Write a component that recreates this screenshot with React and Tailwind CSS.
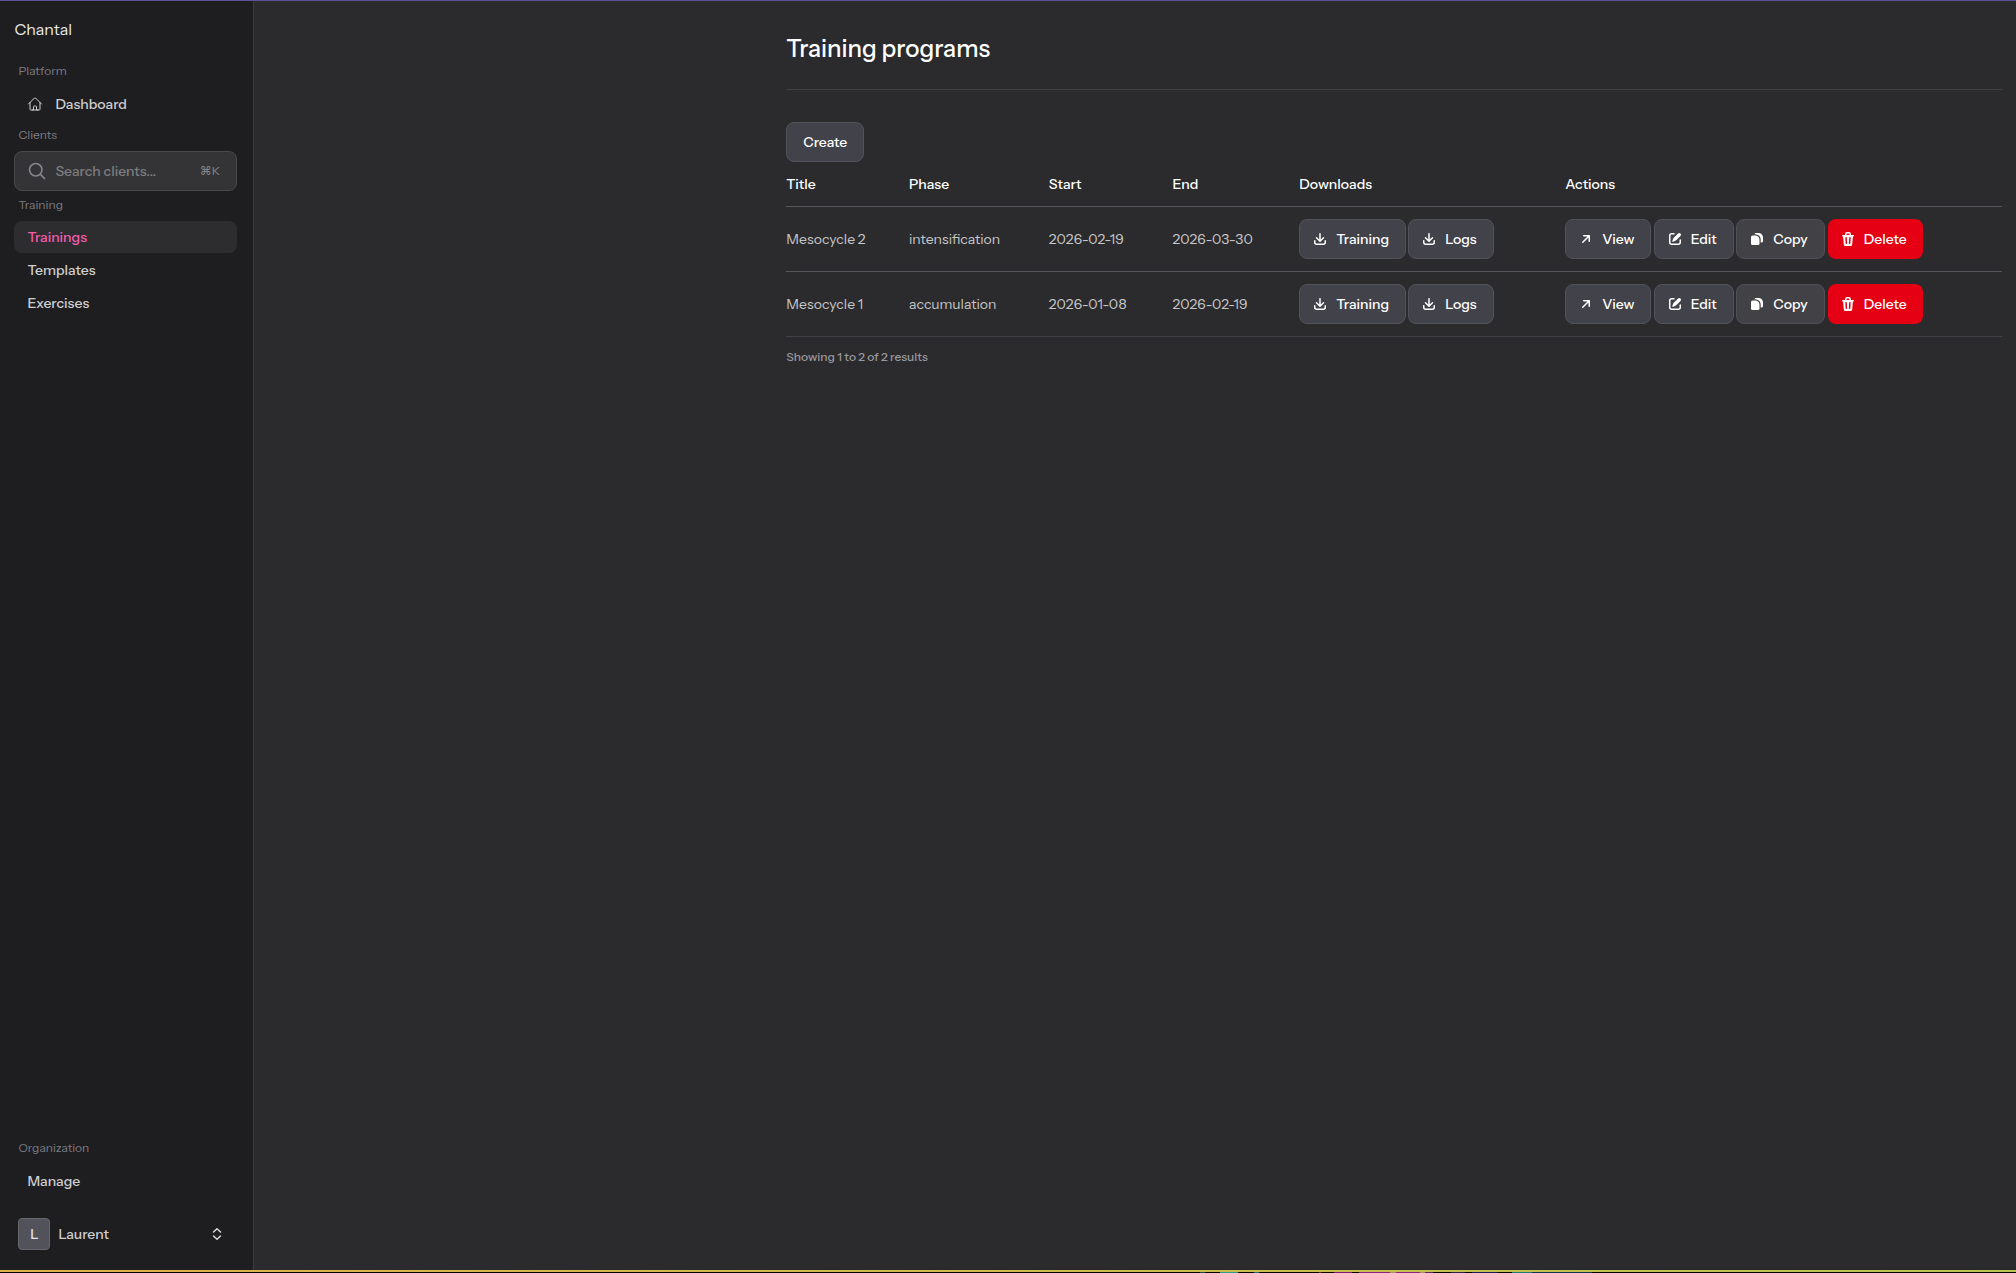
import { clsx } from 'clsx';

const icons = {
  download: [
    'M8.75 2.75a.75.75 0 0 0-1.5 0v5.69L5.03 6.22a.75.75 0 0 0-1.06 1.06l3.5 3.5a.75.75 0 0 0 1.06 0l3.5-3.5a.75.75 0 0 0-1.06-1.06L8.75 8.44V2.75Z',
    'M3.5 9.75a.75.75 0 0 0-1.5 0v1.5A2.75 2.75 0 0 0 4.75 14h6.5A2.75 2.75 0 0 0 14 11.25v-1.5a.75.75 0 0 0-1.5 0v1.5c0 .69-.56 1.25-1.25 1.25h-6.5c-.69 0-1.25-.56-1.25-1.25v-1.5Z',
  ],
  view: [
    'M4.22 11.78a.75.75 0 0 1 0-1.06L9.44 5.5H5.75a.75.75 0 0 1 0-1.5h5.5a.75.75 0 0 1 .75.75v5.5a.75.75 0 0 1-1.5 0V6.56l-5.22 5.22a.75.75 0 0 1-1.06 0Z',
  ],
  edit: [
    'M13.488 2.513a1.75 1.75 0 0 0-2.475 0L6.75 6.774a2.75 2.75 0 0 0-.596.892l-.848 2.047a.75.75 0 0 0 .98.98l2.047-.848a2.75 2.75 0 0 0 .892-.596l4.261-4.262a1.75 1.75 0 0 0 0-2.474Z',
    'M4.75 3.5c-.69 0-1.25.56-1.25 1.25v6.5c0 .69.56 1.25 1.25 1.25h6.5c.69 0 1.25-.56 1.25-1.25V9A.75.75 0 0 1 14 9v2.25A2.75 2.75 0 0 1 11.25 14h-6.5A2.75 2.75 0 0 1 2 11.25v-6.5A2.75 2.75 0 0 1 4.75 2H7a.75.75 0 0 1 0 1.5H4.75Z',
  ],
  copy: [
    'M5.500 3.200A1.500 1.500 0 0 1 7 2h2.500A4.500 4.500 0 0 1 14 6.500V10a1.500 1.500 0 0 1-1.500 1.500H11.700V8.500A5.300 5.300 0 0 0 6.500 3.200Z',
    'M2 6A1.500 1.500 0 0 1 3.500 4.500H6.300A4.200 4.200 0 0 1 10.500 8.700v3.800A1.500 1.500 0 0 1 9 14H3.500A1.500 1.500 0 0 1 2 12.500Z',
  ],
  trash: [
    'M5 3.25V4H2.75a.75.75 0 0 0 0 1.5h.3l.815 8.15A1.5 1.5 0 0 0 5.357 15h5.285a1.5 1.5 0 0 0 1.493-1.35l.815-8.15h.3a.75.75 0 0 0 0-1.5H11v-.75A2.25 2.25 0 0 0 8.75 1h-1.5A2.25 2.25 0 0 0 5 3.25Zm2.25-.75a.75.75 0 0 0-.75.75V4h3v-.75a.75.75 0 0 0-.75-.75h-1.5ZM6.05 6a.75.75 0 0 1 .787.713l.275 5.5a.75.75 0 0 1-1.498.075l-.275-5.5A.75.75 0 0 1 6.05 6Zm3.9 0a.75.75 0 0 1 .712.787l-.275 5.5a.75.75 0 0 1-1.498-.075l.275-5.5a.75.75 0 0 1 .786-.711Z',
  ],
};

const Icon = ({ name }) => (
  <svg viewBox="0 0 16 16" fill="currentColor" className="size-4 shrink-0">
    {icons[name].map((d) => (
      <path key={d} d={d} fillRule="evenodd" clipRule="evenodd" />
    ))}
  </svg>
);

const Button = ({ icon, className, children }) => (
  <button
    className={clsx(
      'flex h-10 shrink-0 items-center gap-2 rounded-lg text-sm font-medium text-white',
      icon ? 'pl-3' : 'justify-center',
      className
    )}
  >
    {icon && <Icon name={icon} />}
    <span>{children}</span>
  </button>
);

const gray = 'border border-[#52525b] bg-[#42424a]';

const programs = [
  { title: 'Mesocycle 2', phase: 'intensification', start: '2026-02-19', end: '2026-03-30' },
  { title: 'Mesocycle 1', phase: 'accumulation', start: '2026-01-08', end: '2026-02-19' },
];

const columns = 'grid grid-cols-[122.7px_139.8px_123.7px_126.8px_266px_1fr] items-center';

const Heading = ({ children }) => (
  <div className="pl-[4px] text-xs leading-4 text-[#7c7c84]">{children}</div>
);

const NavItem = ({ active, children }) => (
  <a
    className={clsx(
      'flex h-8 items-center rounded-lg pl-[13px] text-sm font-medium',
      active ? 'bg-[#2d2d2f] text-[#f45cae]' : 'text-[#cfcfd1]'
    )}
  >
    {children}
  </a>
);

const Sidebar = () => (
  <aside className="flex w-[254px] shrink-0 flex-col border-r border-[#3c3c3f] bg-[#1e1e20] pr-4 pl-[14.4px]">
    <div className="mt-4 text-base leading-6 text-[#e8e8e9]">Chantal</div>

    <div className="mt-[22px]">
      <Heading>Platform</Heading>
    </div>
    <a className="mt-[9px] flex h-8 items-center pl-[13px] text-sm font-medium text-[#cfcfd1]">
      <svg viewBox="0 0 24 24" fill="none" stroke="currentColor" strokeWidth="1.5" strokeLinecap="round" strokeLinejoin="round" className="mr-3 size-4">
        <path d="m2.25 12 8.954-8.955c.44-.439 1.152-.439 1.591 0L21.75 12M4.500 9.750v10.125c0 .621.504 1.125 1.125 1.125H9.750v-4.875c0-.621.504-1.125 1.125-1.125h2.250c.621 0 1.125.504 1.125 1.125V21h4.125c.621 0 1.125-.504 1.125-1.125V9.750M8.250 21h8.250" />
      </svg>
      <span>Dashboard</span>
    </a>

    <div className="mt-[7px]">
      <Heading>Clients</Heading>
    </div>
    <div className="mt-2 flex h-10 items-center rounded-lg border border-[#49494c] bg-[#343436] pr-4 pl-3">
      <svg viewBox="0 0 24 24" fill="none" stroke="currentColor" strokeWidth="2" strokeLinecap="round" className="mr-2 size-5 text-[#85858d]">
        <path d="m21 21-5.197-5.197m0 0A7.500 7.500 0 1 0 5.196 5.196a7.500 7.500 0 0 0 10.607 10.607Z" />
      </svg>
      <span className="flex-1 text-sm font-medium text-[#7d7d80]">Search clients...</span>
      <span className="text-xs text-[#85858c]">⌘K</span>
    </div>

    <div className="mt-[6px]">
      <Heading>Training</Heading>
    </div>
    <nav className="mt-2 flex flex-col gap-px">
      <NavItem active>Trainings</NavItem>
      <NavItem>Templates</NavItem>
      <NavItem>Exercises</NavItem>
    </nav>

    <div className="flex-1" />

    <Heading>Organization</Heading>
    <div className="mt-[9px]">
      <NavItem>Manage</NavItem>
    </div>
    <div className="mt-[21px] mb-5 flex h-8 items-center pr-3 pl-1">
      <div className="flex size-8 items-center justify-center rounded border border-[#66666d] bg-[#52525b] text-sm font-medium text-[#e4e4e7]">
        L
      </div>
      <span className="ml-2 flex-1 text-sm font-medium text-[#cfcfd1]">Laurent</span>
      <svg viewBox="0 0 16 16" fill="none" stroke="currentColor" strokeWidth="1.5" strokeLinecap="round" strokeLinejoin="round" className="size-4 text-[#d6d6d8]">
        <path d="M4.500 6 8 2.700 11.500 6M4.500 10 8 13.300 11.500 10" />
      </svg>
    </div>
  </aside>
);

// Sliver of the desktop that shows below the window
const DesktopEdge = () => (
  <div className="flex h-px shrink-0 bg-black pl-[1200px]">
    <div className="mr-[15px] w-[5px] bg-[#174a48]" />
    <div className="mr-4 w-[18px] bg-[#2a9c8c]" />
    <div className="mr-[60px] w-[5px] bg-[#1d6b74]" />
    <div className="mr-[13px] w-[2px] bg-[#7a1f2b]" />
    <div className="mr-[7px] w-[18px] bg-[#7d1a72]" />
    <div className="w-[31px] bg-[#8d2280]" />
    <div className="w-[6px] bg-[#a89070]" />
    <div className="w-6 bg-[#8d2280]" />
    <div className="w-[5px] bg-[#a89070]" />
    <div className="mr-[18px] w-2 bg-[#5a2460]" />
    <div className="mr-[7px] w-[14px] bg-[#2a2048]" />
    <div className="mr-[14px] w-[26px] bg-[#1c1a55]" />
    <div className="w-5 bg-[#1c7a78]" />
    <div className="w-[60px] bg-[#0f3550]" />
  </div>
);

const App = () => {
  return (
    <div className="flex h-[1273px] flex-col bg-[#2b2b2d] font-['Instrument_Sans',Inter,sans-serif] antialiased">
      <div className="h-px shrink-0 bg-[#5f5195]" />
      <div className="flex min-h-0 flex-1">
        <Sidebar />

        <main className="flex-1 pr-[14px] pl-[532.3px]">
          <h1 className="mt-8 text-2xl leading-8 font-medium text-white">Training programs</h1>
          <div className="mt-6 h-px bg-[#414144]" />

          <div className="mt-8">
            <Button className={clsx(gray, 'w-[78px]')}>Create</Button>
          </div>

          <div className={clsx(columns, 'h-[45px] border-b border-[#56565a] text-sm font-medium text-white')}>
            <span>Title</span>
            <span>Phase</span>
            <span>Start</span>
            <span>End</span>
            <span>Downloads</span>
            <span>Actions</span>
          </div>

          {programs.map((program) => (
            <div key={program.title} className={clsx(columns, 'h-[65px] border-b border-[#56565a] text-sm text-[#c6c6c8] last-of-type:border-[#414148]')}>
              <span>{program.title}</span>
              <span>{program.phase}</span>
              <span>{program.start}</span>
              <span>{program.end}</span>
              <div className="flex gap-[2px]">
                <Button icon="download" className={clsx(gray, 'w-[107px]')}>Training</Button>
                <Button icon="download" className={clsx(gray, 'w-[86px]')}>Logs</Button>
              </div>
              <div className="flex gap-[2.5px]">
                <Button icon="view" className={clsx(gray, 'w-[86px]')}>View</Button>
                <Button icon="edit" className={clsx(gray, 'w-20')}>Edit</Button>
                <Button icon="copy" className="w-[89px] border border-[#505056] bg-[#424246]">Copy</Button>
                <Button icon="trash" className="w-[95px] bg-[#e60013]">Delete</Button>
              </div>
            </div>
          ))}

          <p className="mt-3 text-xs leading-4 font-medium text-[#98989f]">Showing 1 to 2 of 2 results</p>
        </main>
      </div>
      <div className="h-[2px] shrink-0 bg-linear-to-r from-[#deb04a] to-[#b9c455]" />
      <DesktopEdge />
    </div>
  );
};

export default App;
